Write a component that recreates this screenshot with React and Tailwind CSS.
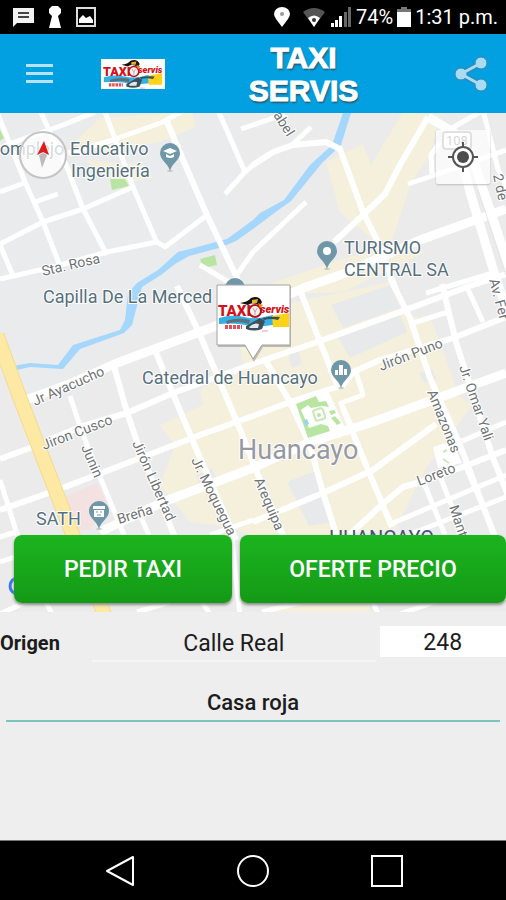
import { useState } from 'react';

const ROADS_WIDE = [
  'M23 401 L67 385 L117 363 L213 327 L306 287 L343 274 L420 240 L506 209',
  'M100 532 L163 502 L253 468 L310 442 L370 423 L506 373',
  'M428 117 L455 133 L470 192 L497 282 L514 330',
  'M470 150 L484 192 L510 270',
];

const ROADS = [
  'M0 510 L57 490 L130 462 L200 435 L253 416 L290 402 L343 385 L353 372 L380 360 L453 338 L506 317',
  'M0 459 L30 448 L80 427 L127 413 L173 393 L253 364 L320 341 L400 312 L470 286 L506 274',
  'M113 363 L127 412 L137 442 L160 500 L176 540',
  'M155 350 L173 394 L200 458 L236 540',
  'M177 286 L200 335 L237 422 L262 485 L285 540',
  'M300 290 L320 342 L337 384',
  'M264 358 L290 402 L310 445 L323 493 L338 540',
  'M390 278 L410 318 L430 378 L460 445 L496 540',
  'M442 284 L456 342 L493 458 L512 505',
  'M167 122 L187 169 L207 215 L238 280',
  'M253 165 L273 152 L293 145 L326 142 L340 149 L363 212 L378 242 L396 290',
  'M428 117 L400 165 L385 194 L363 215 L334 242',
  'M343 408 L366 465 L392 527',
  'M253 522 L323 493 L373 470 L436 424',
  'M350 534 L385 502 L403 487 L420 482 L460 468 L506 450',
];

const ROADS_THIN = [
  'M-3 112 L25 182 L43 222 L60 266',
  'M38 105 L53 140 L67 167 L83 209 L107 255',
  'M105 112 L133 187 L157 243',
  'M0 244 L43 222 L83 209 L133 187',
  'M0 192 L27 182',
  'M35 202 L58 194',
  'M0 148 L23 139 L63 125 L95 112',
  'M68 153 L113 140 L163 122 L184 110',
  'M0 279 L57 266 L107 252 L157 242 L165 247 L207 215',
  'M0 245 L14 278',
  'M218 110 L245 172 L225 194',
  'M245 172 L256 163',
  'M241 129 L285 114',
  'M293 144 L311 127',
  'M306 202 L253 252 L236 276',
  'M483 110 L498 169 L510 195',
  'M408 184 L435 175 L506 150',
  'M432 175 L431 155 L440 142',
  'M445 132 L480 112',
  'M426 293 L493 273',
  'M466 285 L483 322',
  'M413 323 L448 312',
  'M356 372 L363 395 L341 403 L354 432',
  'M453 445 L506 422',
  'M393 523 L506 475',
  'M413 533 L506 497',
  'M424 483 L445 535',
  'M440 476 L463 535',
  'M466 467 L495 535',
  'M70 396 L82 432 L100 477 L126 540',
  'M140 515 L151 540',
  'M210 535 L253 520',
  'M0 480 L19 540',
  'M-4 538 L16 532',
  'M0 562 L18 556',
  'M0 614 L30 600',
  'M45 600 L52 614',
  'M200 265 L232 284',
  'M200 599 L210 614',
  'M232 540 L236 580 L240 614',
  'M137 612 L170 602',
  'M262 612 L310 600',
  'M372 600 L378 614',
  'M400 614 L440 600',
];

const BUILT_AREAS = [
  '68,148 100,118 192,112 196,127 160,142 100,152',
  '85,160 145,165 153,178 115,183',
  '326,162 363,144 371,165 403,112 440,115 430,155 410,185 396,229 390,245 376,242 340,212',
  '270,284 333,262 390,245 426,252 343,292 286,294',
  '292,303 390,282 402,312 432,322 447,362 458,395 472,405 425,470 395,530 270,540 215,525 190,522 160,485 175,445 160,425 203,405 200,390 243,364 240,346',
  '280,600 370,600 370,614 270,614',
];

const GREY_BLOCKS = [
  '331,305 390,285 400,308 343,328',
  '338,338 400,315 407,332 350,358',
  '287,482 318,470 334,522 309,526',
  '288,354 298,349 302,364 292,368',
  '419,373 432,369 436,379 424,383',
  '196,475 212,469 220,485 202,492',
];

const STREETS = [
  { name: 'Sta. Rosa', x: 43, y: 276, angle: -13 },
  { name: 'Jr Ayacucho', x: 35, y: 406, angle: -24 },
  { name: 'Jiron Cusco', x: 44, y: 450, angle: -21 },
  { name: 'Junin', x: 81, y: 447, angle: 67 },
  { name: 'Jirón Libertad', x: 132, y: 443, angle: 66 },
  { name: 'Jr. Moquegua', x: 191, y: 460, angle: 64 },
  { name: 'Arequipa', x: 254, y: 480, angle: 67 },
  { name: 'Breña', x: 119, y: 524, angle: -17 },
  { name: 'Jirón Puno', x: 381, y: 371, angle: -21 },
  { name: 'Amazonas', x: 427, y: 392, angle: 68 },
  { name: 'Jr. Omar Yali', x: 459, y: 367, angle: 71 },
  { name: 'Loreto', x: 419, y: 486, angle: -21 },
  { name: 'Mant', x: 449, y: 507, angle: 72 },
  { name: '2 de', x: 493, y: 175, angle: 78 },
  { name: 'Av. Fer', x: 489, y: 280, angle: 75 },
  { name: 'abel', x: 273, y: 115, angle: 58 },
];

const PLACES = [
  { name: 'Complejo', x: -12, y: 155 },
  { name: 'Educativo', x: 70, y: 155 },
  { name: 'Ingeniería', x: 71, y: 177 },
  { name: 'Capilla De La Merced', x: 43, y: 303 },
  { name: 'Catedral de Huancayo', x: 142, y: 384 },
  { name: 'TURISMO', x: 344, y: 254 },
  { name: 'CENTRAL SA', x: 344, y: 276 },
  { name: 'SATH', x: 36, y: 525 },
];

const Logo = ({ className }) => (
  <svg viewBox="0 0 72 36" className={className} role="img" aria-label="Taxi Servis">
    <path d="M1 22 Q14 18 26 21 T50 20 L55 19 V29 L38 31 Q18 26 1 28Z" fill="#35b0e6" />
    <path d="M54 20 L71 17 V31 H55Z" fill="#ffd21a" />
    <path d="M8 25 Q20 21 32 24 L31 28 Q20 24 9 28Z" fill="#5b7079" />
    <path d="M44 22 Q54 20 62 21 L60 24 Q52 22 46 24Z" fill="#37515c" />
    <path d="M28 30 L42 22 L47 25 L44 33 Q36 36 28 33Z" fill="#3d4f5a" />
    <path d="M31 31 Q36 26 41 28 L40 32 H32Z" fill="#dfe8ec" />
    <text x="0" y="20" fontFamily="Roboto, sans-serif" fontWeight="900" fontSize="15" fill="#d3121d">TAXI</text>
    <text x="42" y="17" fontFamily="Roboto, sans-serif" fontStyle="italic" fontWeight="900" fontSize="11" fill="#d3121d">servis</text>
    <circle cx="37" cy="15" r="6" fill="#f8f1ef" stroke="#b3151f" strokeWidth="2" />
    <path d="M35 12 L37 16 L39 12 M37 16 V19" fill="none" stroke="#cc9999" strokeWidth="1" />
    <path d="M22 7 Q30 6 33 2 Q41 -1 44 6 L42 10 Q35 5 30 9Z" fill="#15120f" />
    <path d="M34 4 L40 3 L39 7 L34 7Z" fill="#f5b324" />
    <path d="M40 7 L45 9 L42 12Z" fill="#ef8a12" />
    <path d="M7 31 H24" stroke="#e4505a" strokeWidth="4" strokeDasharray="3 1" />
    <path d="M44 35 H50" stroke="#e4a0a5" strokeWidth="1" />
  </svg>
);

const PlacePin = ({ x, y, children }) => (
  <g transform={`translate(${x} ${y})`}>
    <ellipse cx="0" cy="17" rx="3" ry="1" fill="#c5c9cc" />
    <path d="M0 17 C-2 9 -10 6 -10 -1 A10 10 0 0 1 10 -1 C10 6 2 9 0 17Z" fill="#6e97a8" />
    {children}
  </g>
);

const CityMap = () => (
  <svg
    viewBox="0 113 506 499"
    preserveAspectRatio="xMidYMid slice"
    className="block h-[499px] w-full bg-[#ebebeb]"
    fontFamily="Roboto, sans-serif"
  >
    <path d="M0 113 H245 L230 240 L130 340 L20 400 L0 345Z" fill="#e9ebed" />
    {BUILT_AREAS.map((points) => (
      <polygon key={points} points={points} fill="#f5f0db" />
    ))}
    {GREY_BLOCKS.map((points) => (
      <polygon key={points} points={points} fill="#e8e9eb" />
    ))}
    <path d="M65 497 L97 483 L107 503 L90 530 L76 530Z" fill="#f3e2e1" />

    {/* Parks */}
    <g fill="#b9e5a3">
      <path d="M110 179 L125 179 L129 186 L112 190Z" />
      <path d="M200 259 L215 255 L217 265 L203 268Z" />
      <path d="M0 130 L4 138 L0 141Z" />
    </g>

    {/* River */}
    <path
      d="M343 113 H351 L341 145 L322 163 L291 201 L277 211 L253 229 L236 241 L219 248 L189 256 L175 264 L161 275 L142 287 L132 325 L124 333 L80 349 L63 369 L30 367 L12 371 L13 366 L30 363 L58 365 L73 345 L120 330 L125 320 L128 293 L137 283 L158 270 L178 252 L190 249 L227 239 L253 220 L260 213 L284 200 L310 165 L332 145Z"
      fill="#a5d6fc"
    />

    <g fill="none" stroke="#ffffff" strokeLinejoin="round">
      {ROADS_THIN.map((d) => <path key={d} d={d} strokeWidth="5" />)}
      {ROADS.map((d) => <path key={d} d={d} strokeWidth="6" />)}
      {ROADS_WIDE.map((d) => <path key={d} d={d} strokeWidth="9" />)}
    </g>
    <path d="M478 190 L506 275" stroke="#e4e5e6" strokeWidth="1" />
    <path d="M-3 335 L18 393 L43 458 L72 533 L105 616" fill="none" stroke="#f5db8d" strokeWidth="15" />
    <path d="M-3 335 L18 393 L43 458 L72 533 L105 616" fill="none" stroke="#fde9a4" strokeWidth="13" />

    {/* Plaza */}
    <path d="M289 400 L327 388 L345 428 L308 443Z" fill="#ffffff" />
    <g fill="#b9e5a3">
      <path d="M296 404 L316 396 L319 402 L326 401 L329 407 L322 406 L311 408 L308 405 L301 410 L309 428 L321 424 L328 426 L330 431 L308 438Z" />
      <path d="M329 411 L334 410 L336 413 L331 415Z M331 418 L335 416 L341 423 L337 425Z" />
    </g>
    <rect x="314" y="409" width="10" height="11" rx="2" transform="rotate(-18 319 414)" fill="none" stroke="#c6e9b4" strokeWidth="2" />
    <circle cx="319" cy="415" r="2" fill="#b9e5a3" />
    <path d="M303 421 L307 419 L309 424 L306 426Z" fill="#9bd6e4" />
    <path d="M433 447 L452 441 L462 463 L438 468Z" fill="#ffffff" />
    <path d="M443 452 L447 450 M443 459 L449 463" stroke="#cbe9bd" strokeWidth="2" />

    <g fontSize="14" fill="#6f7375" stroke="#ffffff" strokeWidth="2" paintOrder="stroke">
      {STREETS.map(({ name, x, y, angle }) => (
        <text key={name} transform={`translate(${x} ${y}) rotate(${angle})`}>{name}</text>
      ))}
    </g>
    <text x="238" y="459" fontSize="27" fill="#9699a3" stroke="#ffffff" strokeWidth="2" paintOrder="stroke">Huancayo</text>
    <text x="329" y="545" fontSize="20" fill="#44527b">HUANCAYO</text>
    <g fontSize="18" fill="#56707c" stroke="#ffffff" strokeWidth="2" paintOrder="stroke">
      {PLACES.map(({ name, x, y }) => (
        <text key={name} x={x} y={y}>{name}</text>
      ))}
    </g>

    <PlacePin x={170} y={154}>
      <path d="M-7 -3 L0 -6 L7 -3 L0 0Z M-4 0 V3 Q0 5 4 3 V0 L0 2Z" fill="#ffffff" />
    </PlacePin>
    <PlacePin x={327} y={252}>
      <circle cx="0" cy="-1" r="4" fill="#ffffff" />
    </PlacePin>
    <PlacePin x={341} y={371}>
      <path d="M-6 -1 H-3 V4 H-6Z M-2 -6 H2 V4 H-2Z M3 -2 H6 V4 H3Z" fill="#ffffff" />
    </PlacePin>
    <PlacePin x={99} y={512}>
      <path d="M-6 -6 H6 V-3 H-6Z M-5 -2 H5 V5 H-5Z" fill="#ffffff" />
      <path d="M-3 0 H-1 M1 0 H3 M-2 3 H2" stroke="#6e97a8" strokeWidth="1" />
    </PlacePin>
    <PlacePin x={235} y={289} />
    <path d="M22 579 A8 8 0 1 0 22 593" fill="none" stroke="#3b78e7" strokeWidth="3" />

    {/* Taxi marker */}
    <path d="M217 285 H290 V346 H262 L253 361 L245 346 H217Z" fill="#8a8a8a" opacity="0.5" transform="translate(1 1)" />
    <path d="M217 285 H290 V345 H262 L253 359 L245 345 H217Z" fill="#ffffff" stroke="#a2a2a2" strokeWidth="1" />
    <svg x="218" y="294" width="72" height="40">
      <Logo />
    </svg>

    <rect x="443" y="132" width="28" height="17" rx="3" fill="#ffffff" stroke="#9a9a9a" strokeWidth="2" />
    <text x="446" y="145" fontSize="13" fill="#777777">108</text>
  </svg>
);

const StatusBar = () => (
  <div className="flex h-[34px] items-center justify-between bg-black pr-2 pl-3 text-[20px] leading-6 text-white">
    <div className="flex items-center gap-[13px]">
      <svg viewBox="0 0 22 20" className="h-5 w-[22px]">
        <path d="M1 1 H22 V16 H5 L1 20Z" fill="#f2f2f2" />
        <path d="M6 6 H17 M6 10 H17" stroke="#444444" strokeWidth="2" />
      </svg>
      <svg viewBox="0 0 16 24" className="h-6 w-4">
        <path d="M5 1 H11 L14 4 V8 L11 11 L14 23 H2 L5 11 L2 8 V4Z" fill="#ffffff" />
      </svg>
      <svg viewBox="0 0 20 20" className="h-5 w-5">
        <rect x="1" y="1" width="18" height="18" fill="none" stroke="#dddddd" strokeWidth="2" />
        <path d="M3 16 V12 L7 8 L10 11 L14 9 L17 13 V16Z" fill="#ffffff" />
      </svg>
    </div>
    <div className="flex items-center">
      <svg viewBox="0 0 16 20" className="mr-3 h-5 w-4">
        <path d="M8 20 L2 12 Q0 9 0 7 A8 7 0 0 1 16 7 Q16 9 14 12Z" fill="#ffffff" />
        <circle cx="8" cy="7" r="2" fill="#999999" />
      </svg>
      <svg viewBox="0 0 24 20" className="mr-1 h-5 w-6">
        <path d="M1 5 Q12 -3 23 5 L12 20Z" fill="#555555" />
        <path d="M6 11 Q12 6 18 11 L12 20Z" fill="#ffffff" />
        <circle cx="12" cy="13" r="2" fill="#333333" />
      </svg>
      <svg viewBox="0 0 22 20" className="mr-1 h-5 w-[22px]">
        <path d="M1 16 H4 V20 H1Z M5 13 H8 V20 H5Z M9 9 H12 V20 H9Z" fill="#ffffff" />
        <path d="M14 5 H17 V20 H14Z M18 0 H21 V20 H18Z" fill="#666666" />
      </svg>
      <span>74%</span>
      <svg viewBox="0 0 14 20" className="mr-1 ml-1 h-5 w-[14px]">
        <path d="M4 0 H10 V2 H14 V5 H0 V2 H4Z" fill="#777777" />
        <path d="M0 5 H14 V20 H0Z" fill="#ffffff" />
      </svg>
      <span>1:31 p.m.</span>
    </div>
  </div>
);

const Header = () => (
  <header className="flex h-[79px] items-center bg-[#02a0e1] pr-[18px] pl-[26px]">
    <button type="button" aria-label="Menú" className="flex w-[27px] flex-col gap-[5px]">
      <span className="h-[3px] w-full bg-[#b5e2f7]" />
      <span className="h-[3px] w-full bg-[#b5e2f7]" />
      <span className="h-[3px] w-full bg-[#b5e2f7]" />
    </button>
    <Logo className="ml-12 h-[30px] w-16 bg-white" />
    <h1 className="flex-1 pr-3 text-center font-['Liberation_Sans',Arial,sans-serif] text-[30px] leading-[33px] font-bold text-white [-webkit-text-stroke:1px_white] [text-shadow:1px_2px_2px_#33515f]">
      TAXI
      <br />
      SERVIS
    </h1>
    <button type="button" aria-label="Compartir">
      <svg viewBox="0 0 34 36" className="h-9 w-[34px]">
        <path d="M27 7 L7 18 L27 29" fill="none" stroke="#3a86a8" strokeWidth="5" />
        <g fill="#a8dcf5" stroke="#3a86a8" strokeWidth="1">
          <circle cx="27" cy="7" r="6" />
          <circle cx="7" cy="18" r="6" />
          <circle cx="27" cy="29" r="6" />
        </g>
        <path d="M27 7 L7 18 L27 29" fill="none" stroke="#a8dcf5" strokeWidth="3" />
      </svg>
    </button>
  </header>
);

const actionClass =
  'h-[68px] rounded-lg bg-linear-to-b from-[#1cb41f] to-[#149a16] pt-[2px] text-[23px] font-medium text-white shadow-[0_2px_3px_#8a8a8a]';

const App = () => {
  const [calle, setCalle] = useState('Calle Real');
  const [numero, setNumero] = useState('248');
  const [referencia, setReferencia] = useState('Casa roja');

  return (
    <div className="flex min-h-screen flex-col overflow-hidden bg-[#eeeeee] font-[Roboto,sans-serif] text-[#1c1c1c]">
      <StatusBar />
      <Header />

      <main className="flex flex-1 flex-col">
        {/* Mapa */}
        <section className="relative">
          <CityMap />
          <button
            type="button"
            aria-label="Norte"
            className="absolute top-[18px] left-[19px] flex size-12 items-center justify-center rounded-full border-2 border-[#c4c4c4] bg-white/75"
          >
            <svg viewBox="0 0 14 30" className="h-[30px] w-[14px]">
              <path d="M8 1 L13 15 L7 12 L1 15Z" fill="#e01b1b" />
              <path d="M3 15 L7 13 L11 15 L6 28Z" fill="#bcbcbc" />
            </svg>
          </button>
          <button
            type="button"
            aria-label="Mi ubicación"
            className="absolute top-[17px] right-4 flex size-[54px] items-center justify-center rounded-xs bg-white/70 shadow-[0_1px_2px_#bbbbbb]"
          >
            <svg viewBox="0 0 30 30" className="size-[30px]" fill="none" stroke="#555555">
              <circle cx="15" cy="15" r="10" fill="#ffffff" strokeWidth="2" />
              <circle cx="15" cy="15" r="6" fill="#4d4d4d" stroke="none" />
              <path d="M15 0 V5 M15 25 V30 M0 15 H5 M25 15 H30" strokeWidth="2" />
            </svg>
          </button>
          <div className="absolute inset-x-0 bottom-[9px] grid grid-cols-[218fr_266fr] gap-2 pl-[14px]">
            <button type="button" className={actionClass}>PEDIR TAXI</button>
            <button type="button" className={actionClass}>OFERTE PRECIO</button>
          </div>
        </section>

        {/* Origen */}
        <form className="pt-[14px]" onSubmit={(e) => e.preventDefault()}>
          <div className="flex items-start">
            <label htmlFor="calle" className="w-[92px] text-[20px] leading-[34px] font-bold">Origen</label>
            <input
              id="calle"
              type="text"
              value={calle}
              onChange={(e) => setCalle(e.target.value)}
              className="h-9 min-w-0 flex-1 border-b-2 border-[#f6f6f6] text-center text-[23px] leading-8 outline-none"
            />
            <input
              type="text"
              aria-label="Número"
              value={numero}
              onChange={(e) => setNumero(e.target.value)}
              className="ml-1 h-[31px] w-1/4 bg-white pt-1 text-center text-[23px] outline-none"
            />
          </div>
          <div className="px-[6px] pt-5">
            <input
              type="text"
              aria-label="Referencia"
              value={referencia}
              onChange={(e) => setReferencia(e.target.value)}
              className="h-10 w-full border-b-2 border-[#7cc5bd] pt-[2px] text-center text-[22px] font-medium outline-none"
            />
          </div>
        </form>
      </main>

      <nav className="flex h-[60px] items-center justify-between border-t border-[#777777] bg-black px-[102px]">
        <button type="button" aria-label="Atrás">
          <svg viewBox="0 0 34 34" className="size-[34px]" fill="none" stroke="#ffffff" strokeWidth="2">
            <path d="M31 3 V31 L5 17Z" strokeLinejoin="round" />
          </svg>
        </button>
        <button type="button" aria-label="Inicio">
          <svg viewBox="0 0 34 34" className="size-[34px]" fill="none" stroke="#ffffff" strokeWidth="2">
            <circle cx="17" cy="17" r="15" />
          </svg>
        </button>
        <button type="button" aria-label="Recientes">
          <svg viewBox="0 0 34 34" className="size-[34px]" fill="none" stroke="#ffffff" strokeWidth="2">
            <rect x="2" y="2" width="30" height="30" />
          </svg>
        </button>
      </nav>
    </div>
  );
};

export default App;
